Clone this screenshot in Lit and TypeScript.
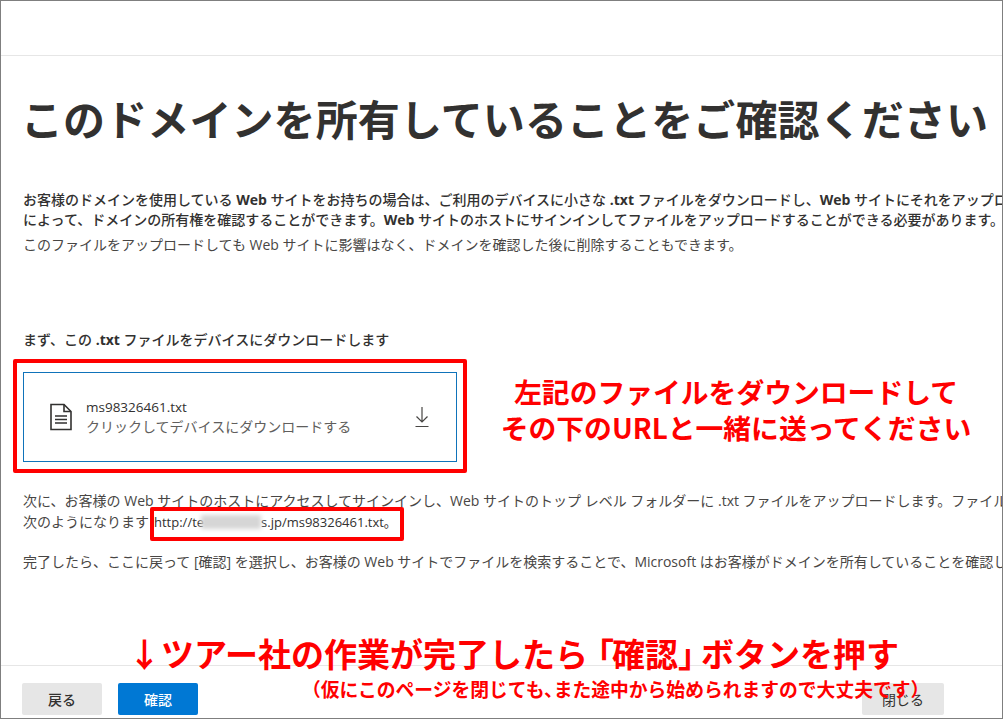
import { LitElement, html, css } from "lit";
import { customElement } from "lit/decorators.js";

@customElement("app-root")
export class AppRoot extends LitElement {
  static styles = css`
    :host {
      display: block;
      width: 1003px;
      height: 719px;
      overflow: hidden;
      font-family: "Open Sans", "Noto Sans CJK JP", sans-serif;
      color: #323130;
      font-size: 14px;
    }
    .frame {
      position: relative;
      box-sizing: border-box;
      width: 1003px;
      height: 719px;
      border: 1px solid #7f7f7f;
      background: #fff;
      overflow: hidden;
      display: flex;
      flex-direction: column;
    }
    .top {
      height: 54px;
      flex: none;
      border-bottom: 1px solid #e6e6e6;
    }
    .content {
      flex: 1;
      min-height: 0;
      padding: 0 0 0 22px;
      overflow: hidden;
      white-space: nowrap;
    }
    h1 {
      margin: 35px 0 0 -2px;
      font-size: 42px;
      line-height: 58px;
      font-weight: 700;
      letter-spacing: 0.1px;
      color: #323130;
    }
    p {
      margin: 0;
      line-height: 20px;
      color: #484644;
    }
    .strong { font-weight: 500; color: #323130; }
    .strong b { font-weight: 700; }
    .intro { margin-top: 41px; }
    .note { margin-top: 5px; }
    .lead { margin-top: 75px; }
    .file {
      box-sizing: border-box;
      width: 434px;
      height: 90px;
      margin-top: 22px;
      border: 1px solid #0f73ba;
      display: flex;
      align-items: center;
      padding: 0 26px 0 25px;
      gap: 13px;
    }
    .file-text { flex: 1; line-height: 19px; color: #605e5c; }
    .file-name { color: #323130; font-size: 13.5px; }
    .next { margin-top: 29px; }
    .url-line { margin-top: 1px; height: 20px; }
    .done { margin-top: 20px; }
    .blur {
      display: inline-block;
      width: 60px;
      height: 14px;
      margin: 0 0 0 -3px;
      vertical-align: -2px;
      background: #d6d6d6;
      filter: blur(2px);
    }
    .url { margin-left: 5px; font-size: 13px; color: #323130; }
    .footer {
      flex: none;
      box-sizing: border-box;
      height: 53px;
      border-top: 1px solid #e6e6e6;
      display: flex;
      align-items: flex-end;
      padding: 0 58px 3px 21px;
      gap: 16px;
    }
    button {
      width: 80px;
      height: 32px;
      border: 0;
      border-radius: 2px;
      font: inherit;
      font-size: 14px;
      font-weight: 500;
      background: #e6e6e6;
      color: #323130;
      padding: 0;
    }
    button.primary { background: #0078d4; color: #fff; }
    button.close { width: 82px; margin-left: auto; font-weight: 400; }
    .mark {
      position: absolute;
      box-sizing: border-box;
      border: 4px solid #ff0000;
      border-radius: 2px;
    }
    .mark-file { left: 12px; top: 358px; width: 454px; height: 114px; }
    .mark-url { left: 149px; top: 506px; width: 254px; height: 34px; }
    .ann {
      position: absolute;
      color: #ff0000;
      font-weight: 700;
      white-space: nowrap;
      font-family: "Noto Sans CJK JP", sans-serif;
    }
    .ann-right {
      left: 480px;
      top: 372px;
      width: 510px;
      text-align: center;
      font-size: 27.8px;
      line-height: 36px;
    }
    .ann-main { left: 127px; top: 630px; font-size: 33px; line-height: 44px; }
    .open { margin-left: -7px; margin-right: -2px; }
    .close-br { margin-right: -10px; }
    .ann-sub { left: 301px; top: 676px; font-size: 18.8px; line-height: 24px; }
    .comma { margin-right: -9px; }
  `;

  render() {
    return html`
      <div class="frame">
        <div class="top"></div>
        <div class="content">
          <h1>このドメインを所有していることをご確認ください</h1>
          <p class="strong intro">お客様のドメインを使用している <b>Web</b> サイトをお持ちの場合は、ご利用のデバイスに小さな <b>.txt</b> ファイルをダウンロードし、<b>Web</b> サイトにそれをアップロードすること</p>
          <p class="strong">によって、ドメインの所有権を確認することができます。<b>Web</b> サイトのホストにサインインしてファイルをアップロードすることができる必要があります。</p>
          <p class="note">このファイルをアップロードしても Web サイトに影響はなく、ドメインを確認した後に削除することもできます。</p>
          <p class="strong lead">まず、この <b>.txt</b> ファイルをデバイスにダウンロードします</p>
          <div class="file">
            <svg width="24" height="28" viewBox="0 0 24 28" fill="none" stroke="#323130" stroke-width="1.6">
              <path d="M2 1.5h13l7 7v18H2z" />
              <path d="M15 1.5v7h7" />
              <path d="M6 13h12M6 16.5h12M6 20h12" />
            </svg>
            <div class="file-text">
              <div class="file-name">ms98326461.txt</div>
              <div>クリックしてデバイスにダウンロードする</div>
            </div>
            <svg width="16" height="22" viewBox="0 0 16 22" fill="none" stroke="#484644" stroke-width="1.2">
              <path d="M8 1v15M2.5 10.5 8 16l5.5-5.5M1.5 20.5h13" />
            </svg>
          </div>
          <p class="next">次に、お客様の Web サイトのホストにアクセスしてサインインし、Web サイトのトップ レベル フォルダーに .txt ファイルをアップロードします。ファイルのパスは</p>
          <p class="url-line">次のようになります<span class="url">http://te<span class="blur"></span>s.jp/ms98326461.txt。</span></p>
          <p class="done">完了したら、ここに戻って [確認] を選択し、お客様の Web サイトでファイルを検索することで、Microsoft はお客様がドメインを所有していることを確認します。</p>
        </div>
        <div class="footer">
          <button>戻る</button>
          <button class="primary">確認</button>
          <button class="close">閉じる</button>
        </div>
        <div class="mark mark-file"></div>
        <div class="mark mark-url"></div>
        <div class="ann ann-right">左記のファイルをダウンロードして<br />その下のURLと一緒に送ってください</div>
        <div class="ann ann-main">↓ツアー社の作業が完了したら<span class="open">「</span>確認<span class="close-br">」</span>ボタンを押す</div>
        <div class="ann ann-sub">（仮にこのページを閉じても<span class="comma">、</span>また途中から始められますので大丈夫です）</div>
      </div>
    `;
  }
}
